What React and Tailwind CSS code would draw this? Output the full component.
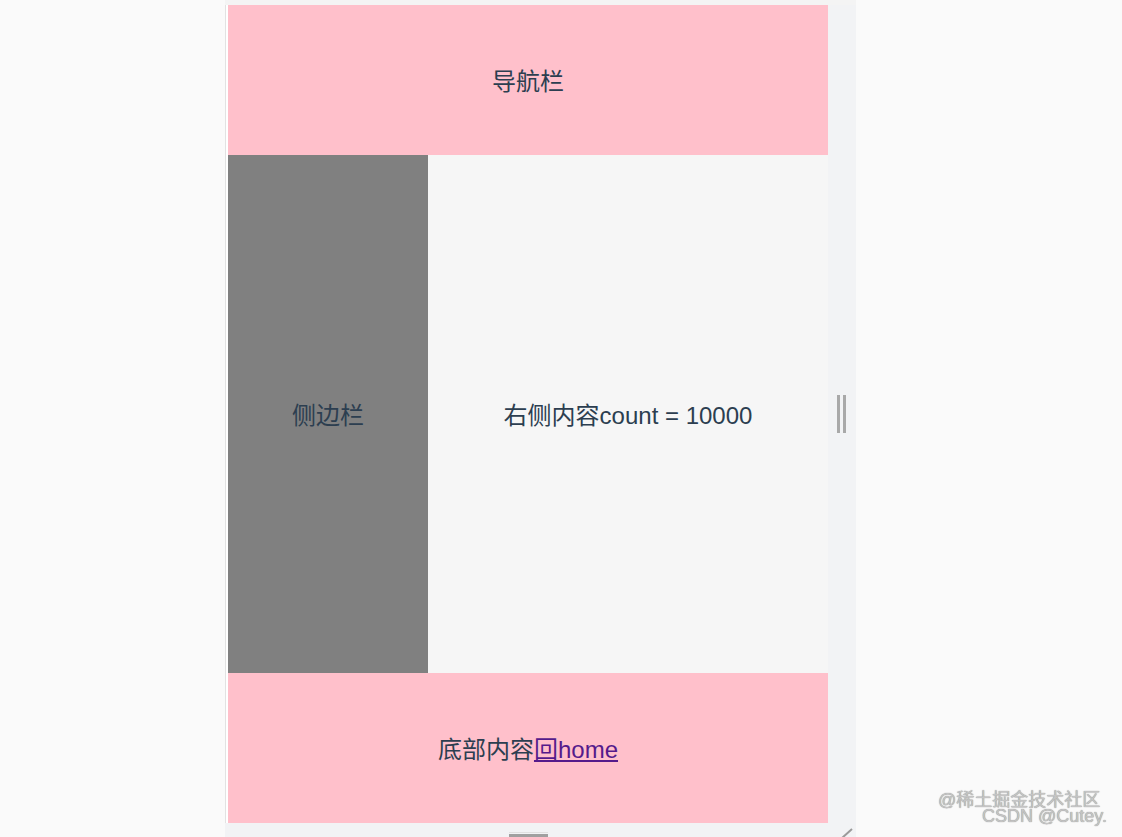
export default function App() {
  const font = { fontFamily: '"Liberation Sans", "Noto Sans CJK SC", sans-serif' };
  return (
    <div className="relative h-[837px] w-full overflow-hidden bg-[#fafafa]" style={font}>
      <div className="ml-[225px] flex w-[631px] flex-col">
        <div className="h-[5px] bg-[#f4f4f4]" />
        <div className="flex">
          <div className="w-[3px] border-l border-[#e2e2e2] bg-white" />
          <div className="flex w-[600px] flex-col text-[24px] leading-none text-[#2c3e50]">
            <div className="flex h-[150px] items-center justify-center bg-[#ffc0cb] pt-[4px]">导航栏</div>
            <div className="flex h-[518px]">
              <div className="flex w-[200px] items-center justify-center bg-[#808080] pt-[4px]">侧边栏</div>
              <div className="flex flex-1 items-center justify-center bg-[#f6f6f6] pt-[3px]">右侧内容count = 10000</div>
            </div>
            <div className="flex h-[150px] items-center justify-center bg-[#ffc0cb] pt-[4px]">
              <span>底部内容</span>
              <a href="#" className="text-[#551a8b] underline">回home</a>
            </div>
          </div>
          <div className="flex w-[28px] items-center bg-[#f2f3f5] pl-[9px]">
            <div className="flex gap-[3px]">
              <div className="h-[38px] w-[3px] bg-[#a9a9a9]" />
              <div className="h-[38px] w-[3px] bg-[#a9a9a9]" />
            </div>
          </div>
        </div>
        <div className="flex h-[14px] bg-[#f2f3f5]">
          <div className="w-[3px]" />
          <div className="flex w-[600px] items-end justify-center">
            <div className="flex w-[39px] flex-col">
              <div className="h-[1px] bg-[#e0e0e0]" />
              <div className="mt-[1px] h-[3px] bg-[#a0a0a0]" />
            </div>
          </div>
          <div className="relative w-[28px]">
            <svg className="absolute left-[12px] top-[5px]" width="14" height="10" viewBox="0 0 14 10">
              <line x1="2" y1="10" x2="12" y2="1" stroke="#9a9a9a" strokeWidth="2" />
            </svg>
          </div>
        </div>
      </div>
      <div className="absolute left-[938px] top-[791px] text-[18px] leading-none text-[#c4c4c4] [text-shadow:0_0_1px_#777]">
        @稀土掘金技术社区
      </div>
      <div className="absolute left-[982px] top-[807px] text-[18px] leading-none text-[#c4c4c4] [text-shadow:0_0_1px_#777]">
        CSDN @Cutey.
      </div>
    </div>
  );
}
